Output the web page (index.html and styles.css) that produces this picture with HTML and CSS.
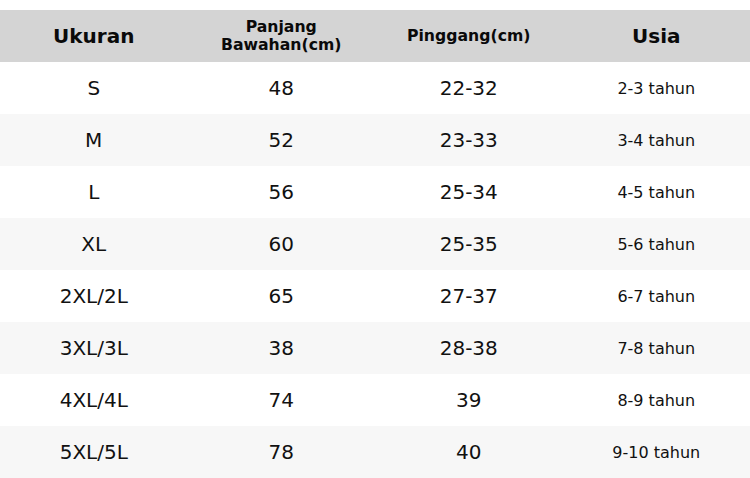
FILE: index.html
```html
<!DOCTYPE html>
<html lang="id">
<head>
<meta charset="utf-8">
<link rel="stylesheet" href="styles.css">
<title>Ukuran</title>
</head>
<body>
<table class="size-table">
  <thead>
    <tr>
      <th class="h-big">Ukuran</th>
      <th class="h-small">Panjang<br>Bawahan(cm)</th>
      <th class="h-small">Pinggang(cm)</th>
      <th class="h-big">Usia</th>
    </tr>
  </thead>
  <tbody>
    <tr><td>S</td><td>48</td><td>22-32</td><td class="age">2-3 tahun</td></tr>
    <tr><td>M</td><td>52</td><td>23-33</td><td class="age">3-4 tahun</td></tr>
    <tr><td>L</td><td>56</td><td>25-34</td><td class="age">4-5 tahun</td></tr>
    <tr><td>XL</td><td>60</td><td>25-35</td><td class="age">5-6 tahun</td></tr>
    <tr><td>2XL/2L</td><td>65</td><td>27-37</td><td class="age">6-7 tahun</td></tr>
    <tr><td>3XL/3L</td><td>38</td><td>28-38</td><td class="age">7-8 tahun</td></tr>
    <tr><td>4XL/4L</td><td>74</td><td>39</td><td class="age">8-9 tahun</td></tr>
    <tr><td>5XL/5L</td><td>78</td><td>40</td><td class="age">9-10 tahun</td></tr>
  </tbody>
</table>
</body>
</html>
```
FILE: styles.css
```css
html, body {
  margin: 0;
  padding: 0;
  background: #ffffff;
}
body {
  padding-top: 10px;
  font-family: "DejaVu Sans", sans-serif;
  color: #111111;
}
.size-table {
  width: 750px;
  border-collapse: collapse;
  table-layout: fixed;
}
.size-table th,
.size-table td {
  padding: 0;
  text-align: center;
  vertical-align: middle;
}
.size-table thead tr {
  background: #d4d4d4;
  height: 52px;
}
.size-table th {
  font-weight: bold;
  color: #0a0a0a;
}
.h-big {
  font-size: 20px;
}
.h-small {
  font-size: 15.7px;
  line-height: 18px;
}
.size-table tbody tr {
  height: 52px;
}
.size-table tbody tr:nth-child(even) {
  background: #f7f7f7;
}
.size-table td {
  font-size: 20px;
}
.size-table td.age {
  font-size: 16px;
}
```
